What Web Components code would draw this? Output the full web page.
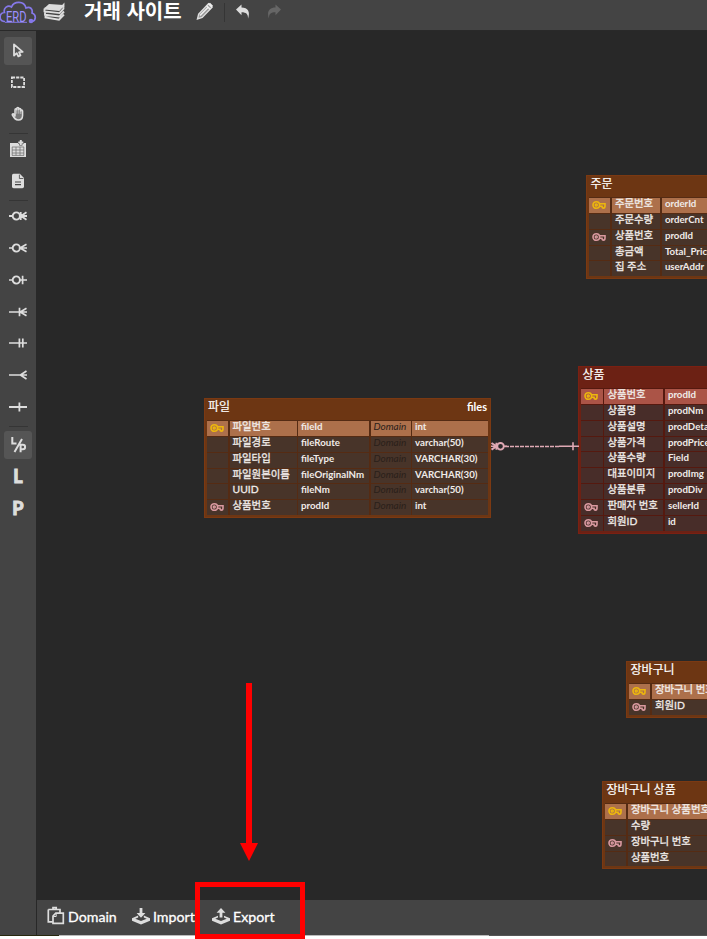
<!DOCTYPE html>
<html lang="ko">
<head>
<meta charset="utf-8">
<title>ERD</title>
<style>
    html, body { margin: 0; height: 100%; overflow: hidden; }
    body {
        background: #282828;
        color: #fff;
        font-family: Lato, "Noto Sans CJK KR", sans-serif;
    }
</style>
</head>
<body>
<erd-app>
    <erd-header slot="header">거래 사이트</erd-header>
    <erd-toolbar slot="tools"></erd-toolbar>
    <erd-canvas>
        <erd-table style="left:586.400px;top:175px;--columns:21px 48.500px 64px 40px 75px" name="주문" physical="">
            <erd-row key="primary" cells="주문번호|orderId"></erd-row>
            <erd-row cells="주문수량|orderCnt"></erd-row>
            <erd-row key="foreign" cells="상품번호|prodId"></erd-row>
            <erd-row cells="총금액|Total_Price"></erd-row>
            <erd-row cells="집 주소|userAddr"></erd-row>
        </erd-table>
        <erd-table style="left:204px;top:398px;--columns:21px 67px 71px 40px 76px" name="파일" physical="files">
            <erd-row key="primary" cells="파일번호|fileId|Domain|int"></erd-row>
            <erd-row cells="파일경로|fileRoute|Domain|varchar(50)"></erd-row>
            <erd-row cells="파일타입|fileType|Domain|VARCHAR(30)"></erd-row>
            <erd-row cells="파일원본이름|fileOriginalNm|Domain|VARCHAR(30)"></erd-row>
            <erd-row cells="UUID|fileNm|Domain|varchar(50)"></erd-row>
            <erd-row key="foreign" cells="상품번호|prodId|Domain|int"></erd-row>
        </erd-table>
        <erd-table color="red" style="left:578.400px;top:366px;--columns:21.500px 59px 64px 40px 75px" name="상품" physical="">
            <erd-row key="primary" cells="상품번호|prodId"></erd-row>
            <erd-row cells="상품명|prodNm"></erd-row>
            <erd-row cells="상품설명|prodDetail"></erd-row>
            <erd-row cells="상품가격|prodPrice"></erd-row>
            <erd-row cells="상품수량|Field"></erd-row>
            <erd-row cells="대표이미지|prodImg"></erd-row>
            <erd-row cells="상품분류|prodDiv"></erd-row>
            <erd-row key="foreign" cells="판매자 번호|sellerId"></erd-row>
            <erd-row key="foreign" cells="회원ID|id"></erd-row>
        </erd-table>
        <erd-table style="left:626.400px;top:661px;--columns:21px 76px 64px 40px 75px" name="장바구니" physical="">
            <erd-row key="primary" cells="장바구니 번호|"></erd-row>
            <erd-row key="foreign" cells="회원ID|"></erd-row>
        </erd-table>
        <erd-table style="left:602.400px;top:781px;--columns:21px 90px 64px 40px 75px" name="장바구니 상품" physical="">
            <erd-row key="primary" cells="장바구니 상품번호|"></erd-row>
            <erd-row cells="수량|"></erd-row>
            <erd-row key="foreign" cells="장바구니 번호|"></erd-row>
            <erd-row cells="상품번호|"></erd-row>
        </erd-table>
    </erd-canvas>
    <erd-footer slot="footer">
        <erd-action icon="domain" style="width:85px">Domain</erd-action>
        <erd-action icon="import" style="width:80px">Import</erd-action>
        <erd-action icon="export">Export</erd-action>
    </erd-footer>
    <guide-marks slot="marks"></guide-marks>
</erd-app>

<script>
// Line work for the tool buttons, all on a 20x20 grid.
const ICONS = {
    pointer: '<path d="M6 3.400v11.200l2.700-2.400 1.600 3.200 2.200-1-1.500-3.200 3.700-.3z" fill="none" stroke="#ddd" stroke-width="1.800" stroke-linejoin="round"/>',
    select: '<rect x="3.900" y="5.500" width="12.200" height="9.500" fill="none" stroke="#ddd" stroke-width="1.800" stroke-dasharray="3.200 1"/>',
    hand: '<path d="M7 12V5.800q0-1 .9-1t.9 1V4.600q0-1 1-1t1 1v1q0-1 1-1t1 1v1.300q0-.9.9-.9t.9.9v4.400c0 3-1.700 4.800-4.300 4.800-2.800 0-3.800-1.600-6-5.100-.4-.9.9-1.500 1.600-.8z" fill="#777" stroke="#ddd" stroke-width="1.500" stroke-linejoin="round"/><path d="M8.800 5.200v4.500M10.800 5v4.700M12.800 6.500V10" stroke="#ddd" stroke-width=".7"/>',
    table: '<path d="M2 4h16v14H2z" fill="#ddd"/><path d="M4 8h12M4 11h12M4 14h12M4 16.400h12M4.200 8v8.400M8 8v8.400M12 8v8.400M15.800 8v8.400" stroke="#777" stroke-width=".8"/><path d="M12.800 1v5.500M10 3.500h5.600" stroke="#444" stroke-width="3.200"/><path d="M12.800 1v5M10.300 3.500h5" stroke="#ddd" stroke-width="2"/>',
    note: '<path d="M5.500 2.800h6.300L16 7v8.600q0 1.600-1.600 1.600H5.600Q4 17.200 4 15.600V4.400Q4 2.800 5.500 2.800z" fill="#ddd"/><path d="M11.400 3.600v3.900h4" fill="none" stroke="#444" stroke-width=".8"/><path d="M7 11h6M7 13.700h6" stroke="#444" stroke-width="1.200"/>',
    zeroOneMany: '<path d="M1 10h4M11 10h8M12.700 6v8M18.500 6.300 13 10l5.500 3.700" fill="none" stroke="#ddd" stroke-width="1.800"/><circle cx="8.300" cy="10" r="3.600" fill="none" stroke="#ddd" stroke-width="1.900"/>',
    zeroMany: '<path d="M1 10h4M12 10h7M18.500 6.300 12 10l6.500 3.700" fill="none" stroke="#ddd" stroke-width="1.700"/><circle cx="8.300" cy="10" r="3.600" fill="none" stroke="#ddd" stroke-width="1.900"/>',
    zeroOne: '<path d="M1 10h4M11.500 10H19M14.600 5.700v8.600" fill="none" stroke="#ddd" stroke-width="1.700"/><circle cx="8.300" cy="10" r="3.600" fill="none" stroke="#ddd" stroke-width="1.900"/>',
    oneMany: '<path d="M1 10h18M11.500 5.700v8.600M18.500 6.300 12.200 10l6.300 3.700" fill="none" stroke="#ddd" stroke-width="1.700"/>',
    oneOnly: '<path d="M1 10h18M11.400 5.500v9M14.800 5.500v9" stroke="#ddd" stroke-width="1.700"/>',
    many: '<path d="M1 10h18M18.500 6 12.400 10l6.100 4" fill="none" stroke="#ddd" stroke-width="1.700"/>',
    one: '<path d="M1 10h18M11.400 5.500v9" stroke="#ddd" stroke-width="1.800"/>',
    logicalPhysical: '<path d="M4.300 2v6.500h4.200M14 4 6.500 17M12.600 17.200V9.800h2.300q2.200 0 2.200 2.200t-2.200 2.200h-2.300" fill="none" stroke="#ddd" stroke-width="2"/>',
    domain: '<path d="M2.300 3.500H14v4.300M2.300 3.500v12.300h4.500M5 3.500h2V1.600h3.200v1.900h2" fill="none" stroke="#ddd" stroke-width="1.700"/><path d="M9.800 7.200h7.500v10.200H7V10z" fill="#444" stroke="#ddd" stroke-width="1.700"/><path d="M10.200 7.500v3H7.300" fill="none" stroke="#ddd"/>',
    import: '<path d="M1 12.300 7.200 9.600v1.800L4.300 12.700 10 15l5.700-2.300-2.900-1.300V9.600l6.200 2.700v2.500l-9 3.700-9-3.700z" fill="#ddd"/><path d="M8.600 2h2.800v5h3L10 11.700 5.600 7h3z" fill="#ddd"/>',
    export: '<path d="M1 12.300 7 9.700v1.700L4.300 12.700 10 15l5.700-2.300-2.700-1.300V9.700l6 2.600v2.500l-9 3.700-9-3.700z" fill="#ddd"/><path d="M8.600 11.500V6.700h-3L10 2l4.400 4.700h-3v4.800z" fill="#ddd"/>'
};

const svg = (name, size = 20) => `<svg viewBox="0 0 20 20" width="${size}" height="${size}">${ICONS[name] || ''}</svg>`;

customElements.define('erd-app', class extends HTMLElement {
    constructor() {
        super();
        this.attachShadow({ mode: 'open' }).innerHTML = `
            <style>
                :host {
                    display: grid;
                    width: 707px;
                    height: 939px;
                    grid-template: 31px 869px 35px 4px / 36px 671px;
                    position: relative;
                    overflow: hidden;
                }
                slot[name=header] { display: block; grid-area: 1 / 1 / 2 / 3; }
                slot[name=tools] { display: block; grid-area: 2 / 1 / 4 / 2; background: #444; }
                .canvas { grid-area: 2 / 2 / 3 / 3; overflow: hidden; }
                slot[name=footer] { display: block; grid-area: 3 / 2 / 4 / 3; }
                .edge {
                    grid-area: 4 / 1 / 5 / 3;
                    background: linear-gradient(90deg, #28280f 59px, #bbb 59px, #bbb 489px, #555 489px) top / 100% 1px no-repeat, #fff;
                }
            </style>
            <slot name="header"></slot>
            <slot name="tools"></slot>
            <div class="canvas"><slot></slot></div>
            <slot name="footer"></slot>
            <div class="edge"></div>
            <slot name="marks"></slot>
        `;
    }
});

customElements.define('erd-header', class extends HTMLElement {
    constructor() {
        super();
        this.attachShadow({ mode: 'open' }).innerHTML = `
            <style>
                :host { display: flex; height: 31px; box-sizing: border-box; background: #444; border-bottom: 1px solid #292929; }
                svg { flex: none; }
                h1 {
                    margin: 0 13px 0 19px;
                    width: 98px;
                    font: bold 20px/22px "Noto Sans CJK KR", sans-serif;
                    white-space: nowrap;
                }
                i { width: 1px; height: 19px; margin: 3px 10px 0 9px; background: #353535; }
            </style>
            <svg width="38" height="26" viewBox="0 0 38 26">
                <path d="M5 21.500H4C-1.500 20.500-1 13 4.500 12.500 3 8 8 4.500 11.500 7 14 1 24 .5 26 8c4-2 7 1 6 5 4 1 4.500 7 .5 8.500" fill="none" stroke="#8578e8" stroke-width="1.700"/>
                <path d="M5 22.300h22" stroke="#8578e8" stroke-width="1"/>
                <circle cx="31" cy="21" r="2.300" fill="#8578e8"/>
                <text x="6" y="21.500" font-family="Roboto" font-size="14" textLength="20.500" lengthAdjust="spacingAndGlyphs" fill="#9c90ff">ERD</text>
            </svg>
            <svg width="29" height="26" viewBox="0 0 29 26" style="margin-left:-2px">
                <path d="m13 4 14.500 1-4.500 5L8 8.500z" fill="#ddd"/>
                <path d="m8.500 8.500 14.500 1.500 4.500-5v2.700M8.500 8.500v3l15 1.600 4.500-5M9 11.500v3.300l14.500 1.700 4.500-5M9.500 14.800v2.700l13.500 2.200 5-5" fill="none" stroke="#ddd" stroke-width="1.900"/>
            </svg>
            <h1><slot></slot></h1>
            <svg width="20" height="22" viewBox="0 0 20 22">
                <path d="m2.500 19 1.200-5L13.500 3.700l3.500 3.500L7.200 17.500z" fill="#999" stroke="#ddd" stroke-width="1.400"/>
                <path d="m11.600 5.700 3.600 3.600M5 15.500 13.600 6.800" stroke="#eee" stroke-width="1.600"/>
                <path d="m13 4 2-1.300 3 3-1.300 2z" fill="#eee"/>
            </svg>
            <i></i>
            <svg width="18" height="22" viewBox="0 0 18 22"><path d="m1 9.500 5.500-5v3.100c6.500 0 9 4.600 6.500 11.100.3-4.700-1.700-6.400-6.500-6.500v3z" fill="#ddd"/></svg>
            <svg width="18" height="22" viewBox="0 0 18 22" style="margin-left:14px"><path d="m14 9.500-5.500-5v3.100c-6.500 0-9 4.600-6.500 11.100-.3-4.700 1.700-6.400 6.500-6.500v3z" fill="#666"/></svg>
        `;
    }
});

customElements.define('tool-button', class extends HTMLElement {
    connectedCallback() {
        const icon = this.getAttribute('icon');
        this.attachShadow({ mode: 'open' }).innerHTML = `
            <style>
                :host { display: grid; place-items: center; width: 28px; height: 28px; border-radius: 3px; flex: none; }
                :host([active]) { background: #555; }
                b { font: 900 18px/26px Lato; color: #ddd; -webkit-text-stroke: .9px #ddd; }
            </style>
            ${icon ? svg(icon) : '<b><slot></slot></b>'}
        `;
    }
});

customElements.define('erd-toolbar', class extends HTMLElement {
    constructor() {
        super();
        this.attachShadow({ mode: 'open' }).innerHTML = `
            <style>
                :host { display: flex; flex-direction: column; gap: 4px; padding: 6px 4px; }
                hr { width: 19px; height: 1px; margin: 1px auto -3px; border: 0; background: #353535; }
            </style>
            <tool-button icon="pointer" active></tool-button>
            <tool-button icon="select" style="margin-top:-1px"></tool-button>
            <tool-button icon="hand"></tool-button>
            <hr>
            <tool-button icon="table"></tool-button>
            <tool-button icon="note"></tool-button>
            <hr style="margin-bottom:-3px">
            <tool-button icon="zeroOneMany"></tool-button>
            <tool-button icon="zeroMany"></tool-button>
            <tool-button icon="zeroOne"></tool-button>
            <tool-button icon="oneMany"></tool-button>
            <tool-button icon="oneOnly" style="margin-top:-1px"></tool-button>
            <tool-button icon="many"></tool-button>
            <tool-button icon="one"></tool-button>
            <hr style="margin-bottom:0">
            <tool-button icon="logicalPhysical" active></tool-button>
            <tool-button style="margin-top:-1px">L</tool-button>
            <tool-button>P</tool-button>
        `;
    }
});

customElements.define('erd-canvas', class extends HTMLElement {
    constructor() {
        super();
        // The origin is shifted so that nodes use window coordinates.
        this.attachShadow({ mode: 'open' }).innerHTML = `
            <style>
                :host { display: block; position: relative; width: 707px; height: 939px; margin: -31px 0 0 -36px; background: #282828; }
                svg { position: absolute; left: 0; top: 0; }
            </style>
            <slot></slot>
            <svg width="707" height="939" fill="none" stroke="#dfa9b4">
                <path d="M505 446.400h54" stroke-width="1.500" stroke-dasharray="4 1"/>
                <path d="M491 446.300h6M504 446.300h3M559 446.300h20M573 442.300v8" stroke-width="1.600"/>
                <path d="m491.500 443 5 3.300-5 3.300M496.500 442.800v7" stroke-width="2"/>
                <circle cx="500.500" cy="446.300" r="3.300" stroke-width="1.900"/>
            </svg>
        `;
    }
});

customElements.define('erd-table', class extends HTMLElement {
    connectedCallback() {
        this.attachShadow({ mode: 'open' }).innerHTML = `
            <style>
                :host {
                    --head: #6d3613; --line: #552b13; --cell: #483429; --primary: #ad704b;
                    display: block;
                    position: absolute;
                    box-sizing: border-box;
                    padding: 0 2px 2px;
                    border: 1px solid #7b3912;
                    background: var(--head);
                }
                :host([color=red]) { --head: #6c2114; --line: #55190f; --cell: #482d29; --primary: #ab5447; border-color: #7b2012; }
                header { display: flex; justify-content: space-between; height: 21px; padding: 0 1px; font: 12px/16px Lato, "Noto Sans CJK KR", sans-serif; -webkit-text-stroke: .2px #fff; }
                header b { font: bold 11px/16px Lato; -webkit-text-stroke: 0; }
                .rows { display: grid; gap: 1px; background: var(--line); border: solid var(--line); border-width: 1px 0 0; }
            </style>
            <header><span>${this.getAttribute('name')}</span><b>${this.getAttribute('physical')}</b></header>
            <div class="rows"><slot></slot></div>
        `;
    }
});

customElements.define('erd-row', class extends HTMLElement {
    connectedCallback() {
        const key = this.getAttribute('key');
        const [name, physical = '', domain = '', type = ''] = this.getAttribute('cells').split('|');
        this.attachShadow({ mode: 'open' }).innerHTML = `
            <style>
                :host {
                    display: grid;
                    grid-template-columns: var(--columns);
                    column-gap: 1.500px;
                    height: 14.850px;
                    color: #f0ebe8;
                    font: bold 9.700px/10px Lato, "Noto Sans CJK KR", sans-serif;
                    white-space: nowrap;
                }
                span { background: var(--cell); padding-left: 3px; height: 14.850px; }
                :host([key=primary]) span { background: var(--primary); }
                .name { font-weight: normal; font-size: 10.400px; line-height: 11px; -webkit-text-stroke: .3px #f0ebe8; }
                .domain { font-style: italic; font-weight: normal; font-size: 10px; color: #2a201a; line-height: 10px; }
                svg { display: block; margin-top: 2px; }
            </style>
            <span>${key ? `<svg width="15" height="10" viewBox="0 0 15 10" fill="none" stroke="${key === 'primary' ? '#edb70d' : '#d999a0'}">
                <circle cx="4.300" cy="5" r="3.300" stroke-width="1.600"/><circle cx="4.300" cy="5" r="1" stroke-width="1.400"/>
                <path d="M7.300 3.700H13v2.200q0 2.200-1.500 2.200T10 6.200H7.300" stroke-width="1.600"/>
            </svg>` : ''}</span>
            <span class="name">${name}</span><span>${physical}</span><span class="domain">${domain}</span><span>${type}</span>
        `;
    }
});

customElements.define('erd-footer', class extends HTMLElement {
    constructor() {
        super();
        this.attachShadow({ mode: 'open' }).innerHTML = `
            <style>
                :host { display: flex; align-items: center; height: 35px; box-sizing: border-box; padding: 0 0 2px 9px; margin-left: 1px; background: #444; }
            </style>
            <slot></slot>
        `;
    }
});

customElements.define('erd-action', class extends HTMLElement {
    connectedCallback() {
        this.attachShadow({ mode: 'open' }).innerHTML = `
            <style>
                :host { display: flex; align-items: center; gap: 2px; flex: none; font: 14.200px/20px Lato; color: #fff; -webkit-text-stroke: .3px #fff; }
                svg { margin-top: -1px; }
            </style>
            ${svg(this.getAttribute('icon'))}<slot></slot>
        `;
    }
});

customElements.define('guide-marks', class extends HTMLElement {
    constructor() {
        super();
        this.attachShadow({ mode: 'open' }).innerHTML = `
            <style>
                :host { position: absolute; left: 0; top: 0; }
                svg { display: block; }
            </style>
            <svg width="707" height="939">
                <path d="M246 683h6v160h6l-9 18-9-18h6z" fill="red"/>
                <path d="M197.500 884.500h105v52h-105z" fill="none" stroke="red" stroke-width="5"/>
            </svg>
        `;
    }
});
</script>
</body>
</html>
